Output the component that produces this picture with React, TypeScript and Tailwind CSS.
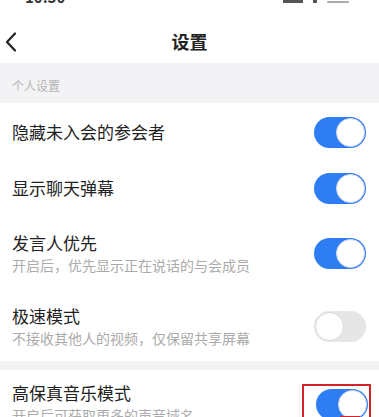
import React from 'react';

const font = { fontFamily: '"Noto Sans CJK SC", "Noto Sans", sans-serif' };

function Toggle({ on }: { on: boolean }) {
  return (
    <div
      className={
        on
          ? 'relative w-[52px] h-[31px] rounded-full bg-[#2f7df2]'
          : 'relative w-[52px] h-[31px] rounded-full bg-[#e6e6e6]'
      }
    >
      <div
        className={
          on
            ? 'absolute top-[1px] right-[1px] w-[29px] h-[29px] rounded-full bg-white border border-[#cfd8e6]'
            : 'absolute top-[1px] left-[1px] w-[29px] h-[29px] rounded-full bg-white border border-[#d9d9d9]'
        }
      />
    </div>
  );
}

function Row({
  title,
  sub,
  on,
  h,
}: {
  title: string;
  sub?: string;
  on: boolean;
  h: string;
}) {
  return (
    <div className={`flex items-center justify-between pl-3 pr-[13px] ${h}`}>
      <div className="flex flex-col">
        <span className="text-[17px] leading-[22px] text-[#222]">{title}</span>
        {sub && <span className="text-[14px] leading-[20px] text-[#ababab] mt-[1px]">{sub}</span>}
      </div>
      <Toggle on={on} />
    </div>
  );
}

export default function App() {
  return (
    <div className="w-[379px] h-[417px] bg-white overflow-hidden" style={font}>
      {/* status bar, cut off at top */}
      <div className="h-[6px] overflow-hidden flex justify-between px-[25px]">
        <span className="text-[15px] font-semibold leading-[15px] -mt-[11px] text-[#333]">10:30</span>
        <div className="flex items-start gap-[10px] pr-[5px]">
          <div className="w-[20px] h-[3px] bg-[#555]" />
          <div className="w-[4px] h-[3px] bg-[#555]" />
          <div className="w-[22px] h-[2px] bg-[#aaa] mt-[1px] rounded" />
        </div>
      </div>

      {/* nav bar */}
      <div className="relative h-[57px] flex items-center justify-center">
        <svg className="absolute left-[5px] top-[26px]" width="12" height="20" viewBox="0 0 12 20">
          <path d="M10 1.5 L2 10 L10 18.5" fill="none" stroke="#222" strokeWidth="2.2" strokeLinecap="round" strokeLinejoin="round" />
        </svg>
        <span className="text-[18px] font-bold text-[#222] mt-[14px]">设置</span>
      </div>

      {/* section header */}
      <div className="h-[40px] bg-[#f3f3f5] flex items-center pl-3 pt-[6px]">
        <span className="text-[12px] text-[#b4b4b4]">个人设置</span>
      </div>

      <Row title="隐藏未入会的参会者" on h="h-[58px]" />
      <Row title="显示聊天弹幕" on h="h-[54px]" />
      <Row title="发言人优先" sub="开启后，优先显示正在说话的与会成员" on h="h-[76px]" />
      <Row title="极速模式" sub="不接收其他人的视频，仅保留共享屏幕" on={false} h="h-[70px]" />

      <div className="h-[9px] bg-[#f3f3f5]" />

      <div className="flex justify-between pl-3 pr-[8px] pt-[12px]">
        <div className="flex flex-col">
          <span className="text-[17px] leading-[22px] text-[#222]">高保真音乐模式</span>
          <span className="text-[14px] leading-[20px] text-[#ababab] mt-[1px]">开启后可获取更多的声音域名</span>
        </div>
        <div className="relative w-[69px] h-[36px] border-2 border-[#d2232a] mt-[2px] pt-[3px] pl-[12px]">
          <Toggle on />
          <div className="absolute left-[36px] bottom-[-2px] w-[20px] h-[4px] bg-[#d2232a]" />
        </div>
      </div>
    </div>
  );
}
